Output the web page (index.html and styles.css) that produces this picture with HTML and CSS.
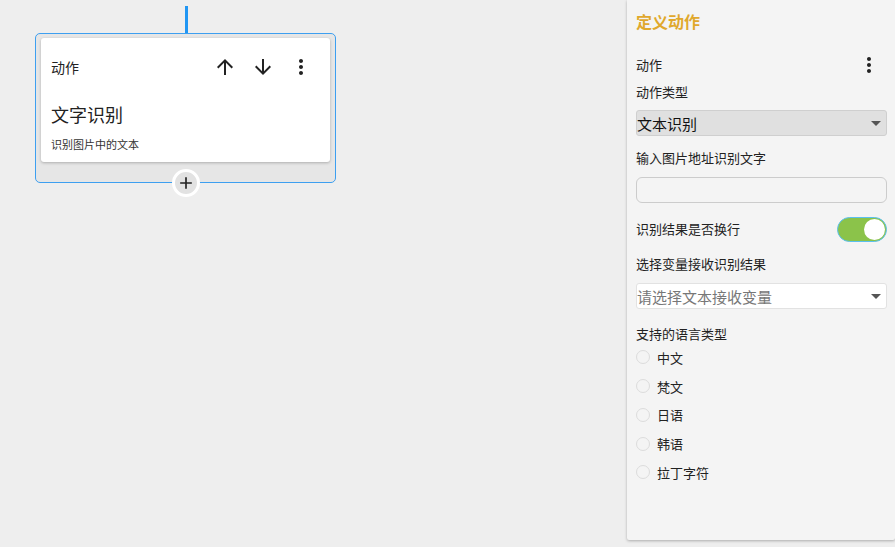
FILE: index.html
```html
<!DOCTYPE html>
<html lang="zh">
<head>
<meta charset="utf-8">
<link rel="stylesheet" href="styles.css">
</head>
<body>
<div class="app">
  <div class="canvas">
    <div class="flow">
      <div class="connector"></div>
      <div class="node">
        <div class="card">
          <div class="card-head">
            <span class="card-kind">动作</span>
            <div class="card-tools">
              <button class="icon-btn" aria-label="上移"><svg viewBox="0 0 24 24" width="24" height="24"><path d="M4 12l1.41 1.41L11 7.83V20h2V7.83l5.58 5.59L20 12l-8-8-8 8z"/></svg></button>
              <button class="icon-btn" aria-label="下移"><svg viewBox="0 0 24 24" width="24" height="24"><path d="M20 12l-1.41-1.41L13 16.17V4h-2v12.17l-5.58-5.59L4 12l8 8 8-8z"/></svg></button>
              <button class="icon-btn" aria-label="更多"><svg viewBox="0 0 24 24" width="24" height="24"><path d="M12 8c1.1 0 2-.9 2-2s-.9-2-2-2-2 .9-2 2 .9 2 2 2zm0 2c-1.1 0-2 .9-2 2s.9 2 2 2 2-.9 2-2-.9-2-2-2zm0 6c-1.1 0-2 .9-2 2s.9 2 2 2 2-.9 2-2-.9-2-2-2z"/></svg></button>
            </div>
          </div>
          <div class="card-title">文字识别</div>
          <div class="card-desc">识别图片中的文本</div>
        </div>
        <button class="add-btn" aria-label="添加"><svg viewBox="0 0 24 24" width="20" height="20"><path d="M19 13h-6v6h-2v-6H5v-2h6V5h2v6h6v2z"/></svg></button>
      </div>
    </div>
  </div>
  <aside class="panel">
    <h2 class="panel-title">定义动作</h2>
    <div class="row-head">
      <span class="label">动作</span>
      <svg class="more" viewBox="0 0 24 24" width="24" height="24"><path d="M12 8c1.1 0 2-.9 2-2s-.9-2-2-2-2 .9-2 2 .9 2 2 2zm0 2c-1.1 0-2 .9-2 2s.9 2 2 2 2-.9 2-2-.9-2-2-2zm0 6c-1.1 0-2 .9-2 2s.9 2 2 2 2-.9 2-2-.9-2-2-2z"/></svg>
    </div>
    <div class="label l-type">动作类型</div>
    <div class="select select-filled"><span>文本识别</span><i class="caret"></i></div>
    <div class="label l-url">输入图片地址识别文字</div>
    <div class="input"></div>
    <div class="toggle-row">
      <span class="label">识别结果是否换行</span>
      <span class="toggle"><span class="knob"></span></span>
    </div>
    <div class="label l-var">选择变量接收识别结果</div>
    <div class="select select-white"><span class="placeholder">请选择文本接收变量</span><i class="caret"></i></div>
    <div class="label l-lang">支持的语言类型</div>
    <ul class="radios">
      <li><span class="radio"></span>中文</li>
      <li><span class="radio"></span>梵文</li>
      <li><span class="radio"></span>日语</li>
      <li><span class="radio"></span>韩语</li>
      <li><span class="radio"></span>拉丁字符</li>
    </ul>
  </aside>
</div>
</body>
</html>
```

FILE: styles.css
```css
* { box-sizing: border-box; }
html, body {
  margin: 0;
  padding: 0;
  width: 895px;
  height: 547px;
  overflow: hidden;
  background: #eeeeee;
  font-family: "Noto Sans CJK SC", "Noto Sans", sans-serif;
  color: #222;
}
.app {
  display: flex;
  height: 547px;
}
.canvas {
  flex: 1;
  padding: 6px 0 0 35px;
}
.flow {
  width: 301px;
  display: flex;
  flex-direction: column;
  align-items: center;
}
.connector {
  width: 3px;
  height: 28px;
  margin-left: 1px;
  background: #2196f3;
}
.node {
  position: relative;
  margin-top: -1px;
  width: 301px;
  height: 150px;
  border: 1px solid #3d9ff0;
  border-radius: 5px;
  background: #e6e6e6;
  padding: 4px 5px 0 5px;
}
.card {
  background: #fff;
  border-radius: 3px;
  box-shadow: 0 1px 3px rgba(0,0,0,0.25);
  height: 124px;
  padding: 5px 10px 0 10px;
}
.card-head {
  display: flex;
  align-items: center;
  height: 48px;
}
.card-kind {
  font-size: 14px;
  flex: 1;
}
.card-tools {
  display: flex;
}
.icon-btn {
  width: 38px;
  height: 38px;
  border: 0;
  padding: 0;
  background: none;
  display: flex;
  align-items: center;
  justify-content: center;
}
.icon-btn svg { fill: #222; }
.card-title {
  margin-top: 11px;
  font-size: 18px;
  line-height: 24px;
  font-weight: 400;
  color: #222;
}
.card-desc {
  margin-top: 10px;
  font-size: 11px;
  line-height: 16px;
  color: #333;
}
.add-btn {
  position: absolute;
  left: 136px;
  top: 135px;
  width: 28px;
  height: 28px;
  border-radius: 50%;
  border: 3px solid #fff;
  background: #e2e2e2;
  padding: 0;
  display: flex;
  align-items: center;
  justify-content: center;
}
.add-btn svg { fill: #222; }

.panel {
  width: 268px;
  height: 540px;
  background: #f4f4f4;
  box-shadow: 0 1px 3px rgba(0,0,0,0.28);
  border-radius: 0 0 2px 2px;
  padding: 10px 8px 0 9px;
}
.panel-title {
  margin: 0;
  font-size: 16px;
  line-height: 22px;
  font-weight: bold;
  color: #e0a82c;
}
.label {
  font-size: 13px;
  line-height: 18px;
  color: #222;
}
.row-head {
  margin-top: 21px;
  height: 24px;
  display: flex;
  align-items: center;
  justify-content: space-between;
  padding-right: 6px;
}
.more { fill: #222; }
.l-type { margin-top: 6px; }
.select {
  height: 26px;
  border-radius: 3px;
  display: flex;
  align-items: center;
  justify-content: space-between;
  padding: 0 5px 0 0;
  font-size: 15px;
}
.select-filled {
  margin-top: 9px;
  background: #e0e0e0;
  border: 1px solid #cfcfcf;
  color: #111;
}
.caret {
  width: 0;
  height: 0;
  border-left: 5px solid transparent;
  border-right: 5px solid transparent;
  border-top: 5px solid #555;
}
.l-url { margin-top: 13px; }
.input {
  margin-top: 10px;
  height: 26px;
  border: 1px solid #cccccc;
  border-radius: 6px;
  background: #f4f4f4;
}
.toggle-row {
  margin-top: 14px;
  height: 24px;
  display: flex;
  align-items: center;
  justify-content: space-between;
}
.toggle {
  width: 50px;
  height: 25px;
  border-radius: 13px;
  background: #8bc34a;
  border: 1.5px solid #5bc0ef;
  display: flex;
  justify-content: flex-end;
  align-items: center;
  padding-right: 1px;
}
.knob {
  width: 21px;
  height: 21px;
  border-radius: 50%;
  background: #fff;
}
.l-var { margin-top: 14px; }
.select-white {
  margin-top: 10px;
  background: #fff;
  border: 1px solid #e2e2e2;
}
.placeholder { color: #777; }
.l-lang { margin-top: 16px; }
.radios {
  list-style: none;
  margin: 0;
  padding: 0;
}
.radios li {
  height: 28.75px;
  display: flex;
  align-items: center;
  font-size: 13px;
  color: #222;
}
.radio {
  width: 14px;
  height: 14px;
  border-radius: 50%;
  border: 1px solid #dcdcdc;
  margin-right: 7px;
}
```
